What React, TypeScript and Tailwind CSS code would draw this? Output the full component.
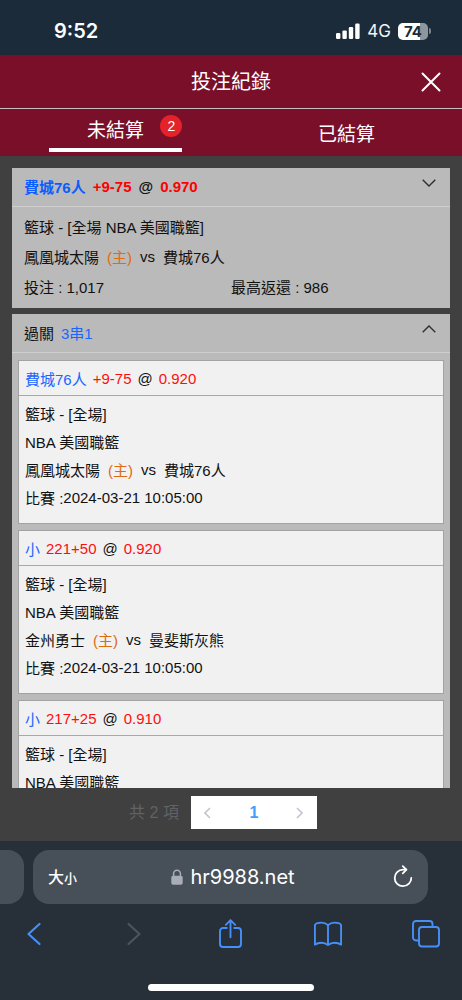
import { useState, type ReactNode } from "react";

type Leg = {
  pick: string;
  line: string;
  odds: string;
  home: string;
  away: string;
  time: string;
};

const LEGS: Leg[] = [
  { pick: "費城76人", line: "+9-75", odds: "0.920", home: "鳳凰城太陽", away: "費城76人", time: "2024-03-21 10:05:00" },
  { pick: "小", line: "221+50", odds: "0.920", home: "金州勇士", away: "曼斐斯灰熊", time: "2024-03-21 10:05:00" },
  { pick: "小", line: "217+25", odds: "0.910", home: "金州勇士", away: "曼斐斯灰熊", time: "2024-03-21 10:05:00" },
];

function StatusBar() {
  return (
    <div className="flex h-[55px] shrink-0 items-center justify-between bg-[#1b2b39] pt-[7px] pr-[31px] pl-[54px] font-['Inter',sans-serif] text-white">
      <span className="text-xl font-semibold">9:52</span>
      <div className="flex items-center gap-[7px]">
        <svg width="24" height="16" viewBox="0 0 24 16" fill="currentColor" aria-hidden="true">
          <rect x="0" y="10" width="4.4" height="6" rx="1.2" />
          <rect x="6.4" y="7.4" width="4.4" height="8.6" rx="1.2" />
          <rect x="12.8" y="4" width="4.4" height="12" rx="1.2" />
          <rect x="19.2" y="0.6" width="4.4" height="15.4" rx="1.2" />
        </svg>
        <span className="text-[17px] text-gray-100">4G</span>
        <div className="flex items-center gap-px">
          <span className="flex h-[17px] w-[30px] items-center justify-center rounded-[5px] bg-linear-to-r from-white from-75% to-[#8f979e] to-75% text-[15px] leading-none font-bold text-[#1b2b39]">
            74
          </span>
          <span className="h-[6px] w-[2px] rounded-r-full bg-[#7b858e]" />
        </div>
      </div>
    </div>
  );
}

function Chevron({ up = false }: { up?: boolean }) {
  return (
    <svg width="14" height="8" viewBox="0 0 14 8" fill="none" stroke="#2b2b2b" strokeWidth="1.3" aria-hidden="true">
      <path d={up ? "M0.7 7.3 7 1l6.3 6.3" : "M0.7 0.7 7 7l6.3-6.3"} />
    </svg>
  );
}

function BetCard({ title, open, onToggle, children }: { title: ReactNode; open: boolean; onToggle: () => void; children: ReactNode }) {
  return (
    <article className="bg-[#bababa]">
      <button
        type="button"
        aria-expanded={open}
        onClick={onToggle}
        className="flex h-[39px] w-full items-start justify-between border-b border-[#cfcfcf] pr-[14px] pl-3 text-left"
      >
        <span className="flex h-9 items-center gap-[7px]">{title}</span>
        <span className="pt-[11px]">
          <Chevron up={open} />
        </span>
      </button>
      {children}
    </article>
  );
}

function LegCard({ leg }: { leg: Leg }) {
  return (
    <section className="border border-[#a3a3a3] bg-[#f1f1f1]">
      <h3 className="flex h-[35px] items-center gap-[6px] border-b border-[#a8a8a8] px-[6px]">
        <span className="text-[#1a66ff]">{leg.pick}</span>
        <span className="text-[#ff0d0d]">{leg.line}</span>
        <span>@</span>
        <span className="text-[#ff0d0d]">{leg.odds}</span>
      </h3>
      <div className="px-[6px] pt-[3px] pb-3">
        <p className="flex h-7 items-center">籃球 - [全場]</p>
        <p className="flex h-7 items-center">NBA 美國職籃</p>
        <p className="flex h-7 items-center gap-2">
          <span>{leg.home}</span>
          <span className="text-[#dd6b10]">(主)</span>
          <span>vs</span>
          <span>{leg.away}</span>
        </p>
        <p className="flex h-7 items-center">
          <span>比賽 :</span>
          <time>{leg.time}</time>
        </p>
      </div>
    </section>
  );
}

function Tabs() {
  const [active, setActive] = useState(0);
  const line = (on: boolean) => (on ? "border-white" : "border-transparent");

  return (
    <div role="tablist" className="grid h-[47px] shrink-0 grid-cols-2 bg-[#7a0f29] text-[19px] text-white">
      <button type="button" role="tab" aria-selected={active === 0} onClick={() => setActive(0)} className="flex items-center justify-center">
        <span className={`relative flex h-[39px] w-[58%] items-center justify-center border-b-4 pb-1 ${line(active === 0)}`}>
          未結算
          <span className="absolute top-[2px] right-0 flex size-[22px] items-center justify-center rounded-full bg-[#e3222a] text-sm">
            2
          </span>
        </span>
      </button>
      <button type="button" role="tab" aria-selected={active === 1} onClick={() => setActive(1)} className="flex items-center justify-center">
        已結算
      </button>
    </div>
  );
}

function Pagination() {
  return (
    <nav aria-label="分頁" className="flex h-[53px] shrink-0 items-center justify-center gap-3 pr-4 pb-1">
      <span className="text-base text-[#606266]">共 2 項</span>
      <div className="flex h-[33px] bg-white">
        <button type="button" aria-label="上一頁" className="flex w-[34px] items-center justify-center">
          <svg width="7" height="12" viewBox="0 0 7 12" fill="none" stroke="#c4c6cf" strokeWidth="1.6" aria-hidden="true">
            <path d="M6 1 1 6l5 5" />
          </svg>
        </button>
        <button type="button" aria-current="page" className="w-[58px] text-base font-bold text-[#409eff]">
          1
        </button>
        <button type="button" aria-label="下一頁" className="flex w-[34px] items-center justify-center">
          <svg width="7" height="12" viewBox="0 0 7 12" fill="none" stroke="#c4c6cf" strokeWidth="1.6" aria-hidden="true">
            <path d="m1 1 5 5-5 5" />
          </svg>
        </button>
      </div>
    </nav>
  );
}

function ToolbarButton({ label, children, disabled = false }: { label: string; children: ReactNode; disabled?: boolean }) {
  return (
    <button type="button" aria-label={label} disabled={disabled} className="flex h-8 w-7 items-center justify-center text-[#4590f8] disabled:text-[#4c545d]">
      <svg width="28" height="30" viewBox="0 0 28 30" fill="none" stroke="currentColor" strokeWidth="1.9" strokeLinecap="round" strokeLinejoin="round">
        {children}
      </svg>
    </button>
  );
}

function BrowserBar() {
  return (
    <footer className="shrink-0 bg-[#272f38] font-['Inter','Noto_Sans_CJK_TC',sans-serif]">
      <div className="flex h-[63px] items-end gap-[9px] pr-[34px]">
        <div className="h-[54px] w-6 rounded-r-2xl bg-[#474f59]" />
        <div className="flex h-[54px] flex-1 items-center rounded-2xl bg-[#474f59] px-[15px] text-white">
          <button type="button" aria-label="文字大小" className="flex items-baseline font-medium">
            <span className="text-base">大</span>
            <span className="text-[13px]">小</span>
          </button>
          <button type="button" className="flex flex-1 items-center justify-center gap-[7px] pr-1 text-xl">
            <svg width="12" height="16" viewBox="0 0 12 16" aria-hidden="true">
              <path d="M2.6 8V4.6a3.4 3.4 0 0 1 6.8 0V8" fill="none" stroke="#a9adb5" strokeWidth="1.5" />
              <rect x="0.3" y="6.8" width="11.4" height="9" rx="1.8" fill="#a9adb5" />
            </svg>
            hr9988.net
          </button>
          <button type="button" aria-label="重新載入">
            <svg width="20" height="24" viewBox="0 0 20 24" fill="none" stroke="currentColor" strokeWidth="1.8" strokeLinecap="round" strokeLinejoin="round" aria-hidden="true">
              <path d="M18.3 12.8A8.3 8.3 0 1 1 10 4.6h3.2" />
              <path d="M9.8 1.2 13.4 4.7 9.8 8.4" />
            </svg>
          </button>
        </div>
      </div>
      <div className="flex h-[60px] items-center justify-between pr-[22px] pl-5">
        <ToolbarButton label="返回">
          <path d="M19.5 5 8.5 15l11 10" strokeWidth="2.2" />
        </ToolbarButton>
        <ToolbarButton label="前進" disabled>
          <path d="m10.5 5 11 10-11 10" strokeWidth="2.2" />
        </ToolbarButton>
        <ToolbarButton label="分享">
          <path d="M10.8 9H7a3 3 0 0 0-3 3v13a3 3 0 0 0 3 3h15a3 3 0 0 0 3-3V12a3 3 0 0 0-3-3h-3.8" />
          <path d="M14.5 18.3V1.3M9.8 5.8 14.5 1.1l4.7 4.7" />
        </ToolbarButton>
        <ToolbarButton label="書籤">
          <path d="M14 6.2C12.2 4.4 10 3.6 7.4 3.6 4.5 3.6 1.5 4.5.9 6v19.6c1.7-1.2 4-1.9 6.5-1.9 2.6 0 4.8.8 6.6 2.4 1.8-1.6 4-2.4 6.6-2.4 2.5 0 4.8.7 6.5 1.9V6c-.6-1.500-3.600-2.400-6.500-2.400-2.600 0-4.800.8-6.600 2.600ZM14 6.200V26" />
        </ToolbarButton>
        <ToolbarButton label="分頁">
          <rect x="7" y="8" width="20" height="19.5" rx="3" />
          <path d="M7 21.5H4a3 3 0 0 1-3-3V5a3 3 0 0 1 3-3h13.5a3 3 0 0 1 3 3v3" />
        </ToolbarButton>
      </div>
      <div className="flex h-9 items-end justify-center pb-[9px]">
        <div className="h-[7px] w-[36%] rounded-full bg-white" />
      </div>
    </footer>
  );
}

export default function App() {
  const [singleOpen, setSingleOpen] = useState(false);
  const [parlayOpen, setParlayOpen] = useState(true);

  return (
    <div className="flex h-screen flex-col bg-[#404040] font-['Liberation_Sans','Noto_Sans_CJK_TC',sans-serif] text-[15px] leading-[normal] text-[#111]">
      <StatusBar />
      <header className="grid h-[54px] shrink-0 grid-cols-[1fr_auto_1fr] items-center border-b border-[#c9bdbd] bg-[#7a0f29] px-[21px] text-white">
        <h1 className="col-start-2 text-xl">投注紀錄</h1>
        <button type="button" aria-label="關閉" className="justify-self-end">
          <svg width="20" height="20" viewBox="0 0 20 20" fill="none" stroke="currentColor" strokeWidth="2" strokeLinecap="round" aria-hidden="true">
            <path d="m1.5 1.5 17 17M18.5 1.5l-17 17" />
          </svg>
        </button>
      </header>
      <Tabs />

      <main className="flex min-h-0 flex-1 flex-col px-3 pt-3">
        <div className="flex min-h-0 flex-1 flex-col gap-[6px] overflow-y-auto [scrollbar-width:none]">
          <BetCard
            open={singleOpen}
            onToggle={() => setSingleOpen(!singleOpen)}
            title={
              <span className="flex items-center gap-[7px] font-bold">
                <span className="text-[#0d5cff]">費城76人</span>
                <span className="text-[#ff0000]">+9-75</span>
                <span>@</span>
                <span className="text-[#ff0000]">0.970</span>
              </span>
            }
          >
            <div className="px-3 pt-1 pb-[7px]">
              <p className="flex h-[30px] items-center">籃球 - [全場 NBA 美國職籃]</p>
              <p className="flex h-[30px] items-center gap-2">
                <span>鳳凰城太陽</span>
                <span className="text-[#dd6b10]">(主)</span>
                <span>vs</span>
                <span>費城76人</span>
              </p>
              <div className="grid h-[30px] grid-cols-2 items-center">
                <span>投注 : 1,017</span>
                <span>最高返還 : 986</span>
              </div>
            </div>
          </BetCard>

          <BetCard
            open={parlayOpen}
            onToggle={() => setParlayOpen(!parlayOpen)}
            title={
              <>
                <span>過關</span>
                <span className="text-[#1a66ff]">3串1</span>
              </>
            }
          >
            {parlayOpen && (
              <div className="flex flex-col gap-[6px] p-[6px] pt-[7px]">
                {LEGS.map((leg) => (
                  <LegCard key={leg.line} leg={leg} />
                ))}
              </div>
            )}
          </BetCard>
        </div>
        <Pagination />
      </main>
      <BrowserBar />
    </div>
  );
}
